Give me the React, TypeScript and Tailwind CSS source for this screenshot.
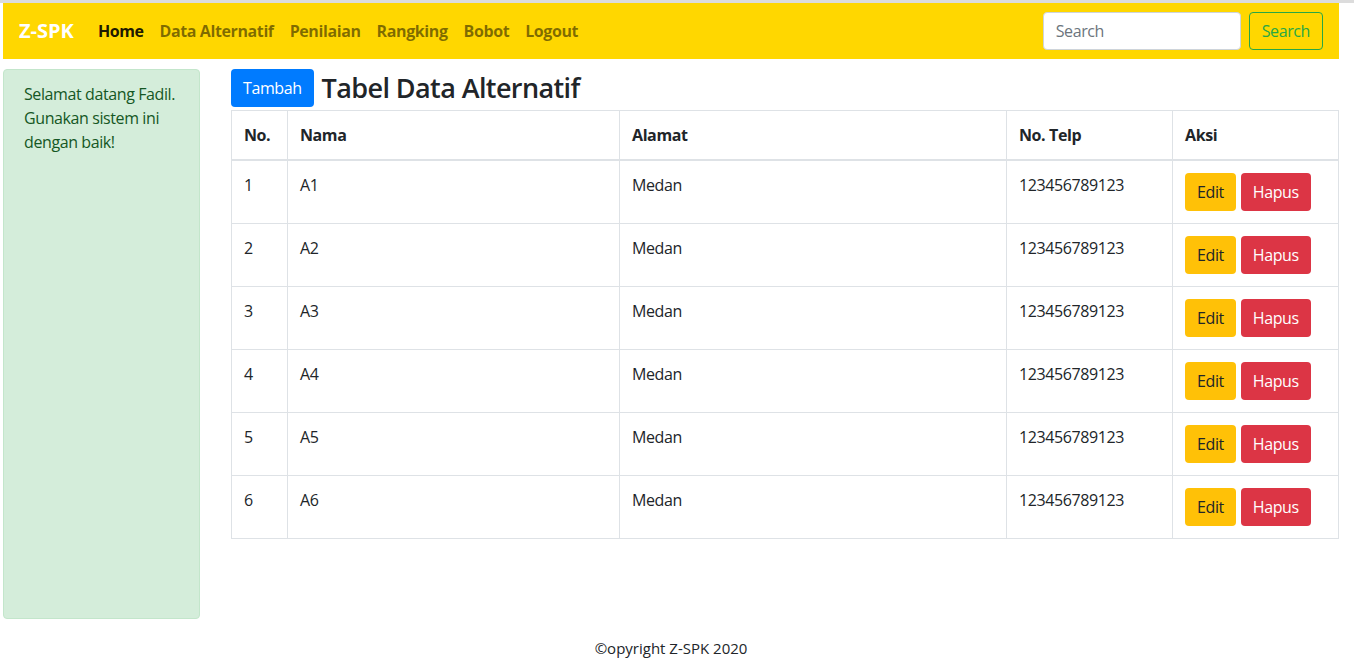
import React from 'react';

const rows = [1, 2, 3, 4, 5, 6].map((n) => ({ no: n, nama: `A${n}`, alamat: 'Medan', telp: '123456789123' }));

const links = ['Data Alternatif', 'Penilaian', 'Rangking', 'Bobot', 'Logout'];

export default function App() {
  return (
    <div
      className="min-h-[659px] bg-white text-[#212529] text-base tracking-[-0.4px]"
      style={{ fontFamily: '"Open Sans", "Noto Sans", sans-serif' }}
    >
      <div className="h-[3px] bg-[#dcdcdc]" />
      <div className="w-[1336px] ml-[3px]">
        {/* navbar */}
        <nav className="h-[56px] bg-[#ffd700] flex items-center pl-4 pr-4">
          <span className="text-white font-bold text-[20px] tracking-normal mr-4">Z-SPK</span>
          <ul className="flex items-center font-bold text-base">
            <li className="px-2 text-black/90">Home</li>
            {links.map((l) => (
              <li key={l} className="px-2 text-black/50">{l}</li>
            ))}
          </ul>
          <div className="ml-auto flex items-center gap-2">
            <input
              placeholder="Search"
              className="w-[198px] h-[38px] rounded bg-white border border-[#ced4da] px-3 text-base placeholder:text-[#6c757d] outline-none"
            />
            <button className="h-[38px] px-3 rounded border border-[#28a745] text-[#28a745] text-base">Search</button>
          </div>
        </nav>

        <div className="flex mt-[10px]">
          {/* sidebar */}
          <aside className="w-[197px] h-[550px] shrink-0 rounded bg-[#d4edda] border border-[#c3e6cb] text-[#155724] px-5 py-3 leading-6">
            <p className="whitespace-nowrap">
              Selamat datang Fadil.
              <br />
              Gunakan sistem ini
              <br />
              dengan baik!
            </p>
          </aside>

          {/* main */}
          <main className="ml-[31px] flex-1">
            <div className="flex items-center gap-2">
              <button className="h-[38px] px-3 rounded bg-[#007bff] text-white text-base">Tambah</button>
              <h3 className="text-[27px] font-semibold leading-tight tracking-[-0.6px]">Tabel Data Alternatif</h3>
            </div>
            <table className="mt-[3px] w-full border-collapse border border-[#dee2e6]">
              <thead>
                <tr className="text-left font-bold">
                  <th className="w-[56px] border border-[#dee2e6] border-b-2 p-3">No.</th>
                  <th className="w-[332px] border border-[#dee2e6] border-b-2 p-3">Nama</th>
                  <th className="w-[387px] border border-[#dee2e6] border-b-2 p-3">Alamat</th>
                  <th className="w-[166px] border border-[#dee2e6] border-b-2 p-3">No. Telp</th>
                  <th className="border border-[#dee2e6] border-b-2 p-3">Aksi</th>
                </tr>
              </thead>
              <tbody>
                {rows.map((r) => (
                  <tr key={r.no} className="align-top">
                    <td className="border border-[#dee2e6] p-3 h-[63px]">{r.no}</td>
                    <td className="border border-[#dee2e6] p-3">{r.nama}</td>
                    <td className="border border-[#dee2e6] p-3">{r.alamat}</td>
                    <td className="border border-[#dee2e6] p-3">{r.telp}</td>
                    <td className="border border-[#dee2e6] p-3">
                      <div className="flex gap-[5px]">
                        <button className="h-[38px] px-3 rounded bg-[#ffc107] text-[#212529]">Edit</button>
                        <button className="h-[38px] px-3 rounded bg-[#dc3545] text-white">Hapus</button>
                      </div>
                    </td>
                  </tr>
                ))}
              </tbody>
            </table>
          </main>
        </div>

        <footer className="text-center pt-[18px] text-[15px] tracking-normal">©opyright Z-SPK 2020</footer>
      </div>
    </div>
  );
}
